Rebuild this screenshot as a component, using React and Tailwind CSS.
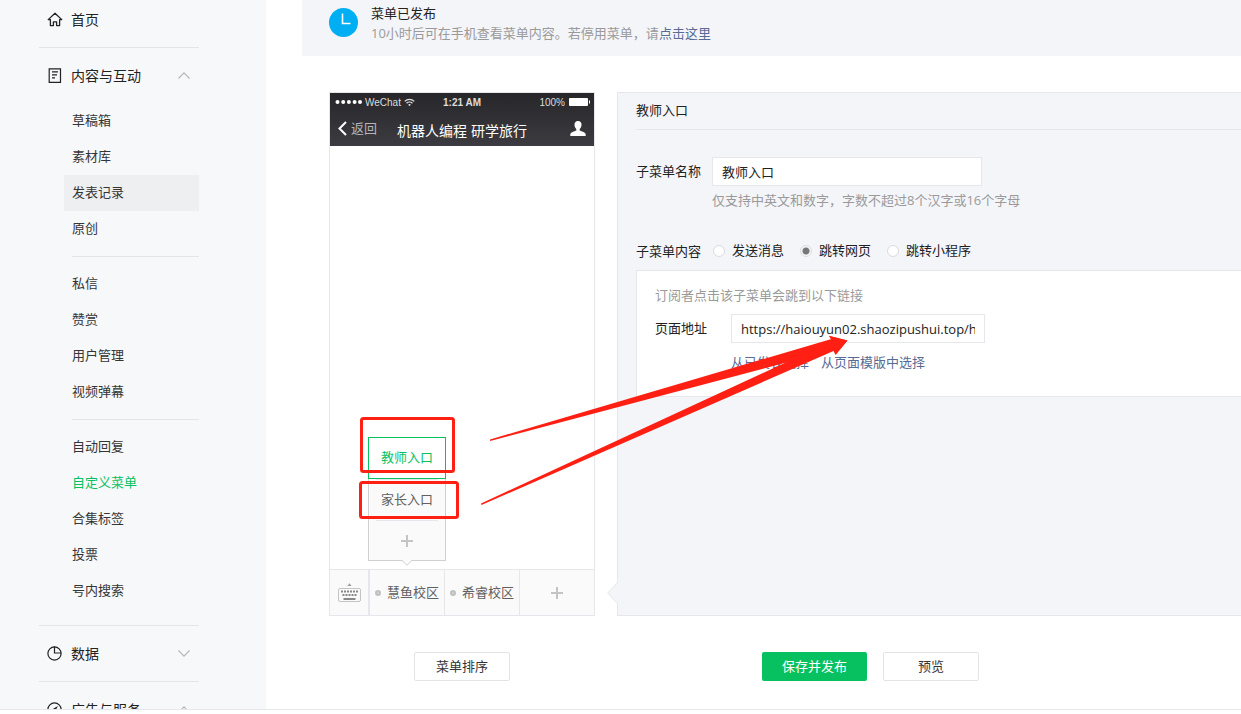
import React from "react";

const contentGroups = [
  ["草稿箱", "素材库", "发表记录", "原创"],
  ["私信", "赞赏", "用户管理", "视频弹幕"],
  ["自动回复", "自定义菜单", "合集标签", "投票", "号内搜索"],
];

const itemStyles = {
  发表记录: "bg-[#eeeff1] text-[#353535]",
  自定义菜单: "text-[#07c160]",
};

function HomeIcon() {
  return (
    <svg className="size-4" viewBox="0 0 16 16" fill="none" stroke="#222" strokeWidth="1.3" strokeLinejoin="round">
      <path d="M8 1.200 1.200 7.600h2.200v6h3V9.800h3.200v3.800h3v-6h2.200z" />
    </svg>
  );
}

function DocIcon() {
  return (
    <svg className="size-4" viewBox="0 0 16 16" fill="none" stroke="#222" strokeWidth="1.2">
      <path d="M2.200.800h11.300v13.600H2.200z" />
      <path d="M5 3.800h6M5 6.800h5M5 9.800h3" />
    </svg>
  );
}

function PieIcon() {
  return (
    <svg className="size-4" viewBox="0 0 16 16" fill="none" stroke="#222" strokeWidth="1.2">
      <circle cx="7.500" cy="7.500" r="6.600" />
      <path d="M7.500.500V7h6.600" />
    </svg>
  );
}

function CompassIcon() {
  return (
    <svg className="size-4" viewBox="0 0 16 16" fill="none" stroke="#222" strokeWidth="1.2">
      <circle cx="7.500" cy="7.500" r="6.600" />
      <path d="M11 4 8.500 8.500 4 11l2.500-4.500z" fill="#222" stroke="none" />
    </svg>
  );
}

function Chevron({ open }) {
  return (
    <svg className="h-2 w-3" viewBox="0 0 12 8" fill="none" stroke="#b4b6b9" strokeWidth="1.1">
      <path d={open ? "M.5 6.500 6 .8 11.500 6.500" : "M.5 .5 6 6.200 11.500 .5"} />
    </svg>
  );
}

function Section({ icon, label, open }) {
  return (
    <button type="button" aria-expanded={open} className="flex h-[55px] w-full shrink-0 items-center pl-2 pr-[9px] text-sm">
      {icon}
      <span className="ml-2 flex-1 text-left">{label}</span>
      <Chevron open={open} />
    </button>
  );
}

function Divider({ className = "" }) {
  return <hr className={`h-px shrink-0 border-0 bg-[#e4e5e8] ${className}`} />;
}

function Sidebar() {
  return (
    <nav className="flex w-[266px] shrink-0 flex-col overflow-hidden bg-[#f7f8fa] pl-[39px] pr-[67px] text-[#222]">
      <a href="#home" className="mb-[7px] flex h-10 shrink-0 items-center pl-2 text-sm">
        <HomeIcon />
        <span className="ml-2">首页</span>
      </a>
      <Divider />
      <Section icon={<DocIcon />} label="内容与互动" open />
      {contentGroups.map((group, i) => (
        <React.Fragment key={group[0]}>
          {i > 0 && <Divider className="my-[9px] ml-[33px]" />}
          <ul className="ml-[25px] shrink-0">
            {group.map((name) => (
              <li key={name}>
                <a href="#menu" className={`flex h-9 items-center pl-2 ${itemStyles[name] || "text-[#353535]"}`}>
                  {name}
                </a>
              </li>
            ))}
          </ul>
        </React.Fragment>
      ))}
      <Divider className="mt-4" />
      <Section icon={<PieIcon />} label="数据" open={false} />
      <Divider />
      <Section icon={<CompassIcon />} label="广告与服务" open />
    </nav>
  );
}

function Notice() {
  return (
    <section className="flex h-14 items-start bg-[#f4f5f9] pl-[27px]">
      <svg className="mt-2 size-[29px]" viewBox="0 0 29 29">
        <circle cx="14.500" cy="14.500" r="14.500" fill="#00aef3" />
        <path d="M13.500 5.500v10h8" fill="none" stroke="#fff" strokeWidth="1.600" />
      </svg>
      <div className="ml-[13px] mt-[3px] leading-5">
        <p className="text-[#222]">菜单已发布</p>
        <p className="text-[#9a9a9a]">
          10小时后可在手机查看菜单内容。若停用菜单，请
          <a href="#disable" className="text-[#576b95]">点击这里</a>
        </p>
      </div>
    </section>
  );
}

function Plus() {
  return (
    <svg className="size-3" viewBox="0 0 12 12" stroke="#c4c4c4" strokeWidth="2">
      <path d="M6 0v12M0 6h12" />
    </svg>
  );
}

function PhoneHeader() {
  return (
    <header className="h-[53px] bg-linear-to-b from-[#27272a] to-[#3c3b41] font-['Liberation_Sans','Noto_Sans_CJK_SC',sans-serif] text-white">
      <div className="flex h-[18px] items-center justify-between px-1 text-[10px] text-[#ddd]">
        <div className="flex flex-1 items-center gap-[3px]">
          <svg className="h-[6px] w-7" viewBox="0 0 28 6" fill="#fff">
            {[3.500, 9.200, 14.900, 20.600, 26].map((x) => (
              <circle key={x} cx={x} cy="3" r="2" />
            ))}
          </svg>
          <span>WeChat</span>
          <svg className="h-[9px] w-[11px]" viewBox="0 0 12 9" fill="none" stroke="#ddd" strokeWidth="1.400">
            <path d="M.8 3.300a7.500 7.500 0 0 1 10.400 0M2.800 5.300a4.600 4.600 0 0 1 6.400 0" />
            <path d="M4.500 6.800 6 8.500l1.500-1.700a2.200 2.200 0 0 0-3 0z" fill="#ddd" stroke="none" />
          </svg>
        </div>
        <span className="font-bold">1:21 AM</span>
        <div className="flex flex-1 items-center justify-end gap-1">
          <span>100%</span>
          <svg className="h-2 w-[21px]" viewBox="0 0 21 8" fill="#fff">
            <rect width="19" height="8" rx="1" />
            <path d="M20 2.500h1v3h-1z" />
          </svg>
        </div>
      </div>
      <div className="grid h-[35px] grid-cols-[1fr_auto_1fr] items-center px-2">
        <button type="button" className="flex items-center gap-1 text-[13px] text-[#b5b5b8]">
          <svg className="h-[15px] w-[9px]" viewBox="0 0 9 15" fill="none" stroke="#fff" strokeWidth="2">
            <path d="M8 1 1.500 7.500 8 14" />
          </svg>
          返回
        </button>
        <h2 className="pt-1 text-sm">机器人编程 研学旅行</h2>
        <svg className="h-[15px] w-4 justify-self-end" viewBox="0 0 16 15" fill="#fff">
          <path d="M8 0C5.500 0 4.300 1.700 4.500 4c.1 1.800.8 3.200 1.800 4v1.600C4.500 10.500.3 11.200.3 13.600V15h15.400v-1.400c0-2.400-4.200-3.100-6-4V8c1-.8 1.700-2.200 1.800-4 .2-2.300-1-4-3.500-4z" />
        </svg>
      </div>
    </header>
  );
}

function KeyboardIcon() {
  return (
    <svg className="h-5 w-[23px]" viewBox="0 0 23 20" fill="none">
      <path d="M9.500 3 11.500 .3 13.500 3z" fill="#999" />
      <rect x=".5" y="5.500" width="22" height="13" rx="1.500" stroke="#c4c4c4" />
      <path d="M3 8.500h17" stroke="#888" strokeWidth="2" strokeDasharray="2 1" />
      <path d="M4.500 12h14" stroke="#888" strokeWidth="2" strokeDasharray="2 1" />
      <path d="M5.500 16h12" stroke="#888" strokeWidth="2" />
    </svg>
  );
}

function SubMenu() {
  return (
    <div className="absolute bottom-[54px] left-[38px] w-[78px] text-[#616161]">
      <div className="border border-[#d0d0d0] bg-[#fafafa]">
        <button type="button" className="-mx-px -mt-px flex h-[42px] w-[78px] items-center justify-center border border-[#07c160] bg-white text-[#07c160]">
          教师入口
        </button>
        <div className="px-[7px]">
          <button type="button" className="flex h-[42px] w-full items-center justify-center border-y border-[#e7e7eb]">
            家长入口
          </button>
        </div>
        <button type="button" aria-label="添加子菜单" className="flex h-[39px] w-full items-center justify-center">
          <Plus />
        </button>
      </div>
      <svg className="absolute left-[34px] top-full -mt-px h-[6px] w-[10px]" viewBox="0 0 10 6">
        <path d="M0 0h10L5 5z" fill="#fafafa" />
        <path d="M0 .5 5 5.200 10 .5" fill="none" stroke="#d0d0d0" />
      </svg>
    </div>
  );
}

function Phone() {
  return (
    <section className="relative flex h-[524px] w-[266px] shrink-0 flex-col border border-[#e7e7eb] bg-white">
      <PhoneHeader />
      <div className="flex-1" />
      <SubMenu />
      <footer className="flex h-[46px] border-t border-[#e7e7eb] bg-[#fafafa] text-[#616161]">
        <div className="flex w-10 items-center justify-center border-r-2 border-[#e7e7eb]">
          <KeyboardIcon />
        </div>
        {["慧鱼校区", "希睿校区"].map((name) => (
          <button key={name} type="button" className="flex w-[75px] items-center justify-center gap-[6px] border-r border-[#e7e7eb]">
            <span className="size-[6px] rounded-full border-2 border-[#c0c0c0] bg-[#d4d4d4]" />
            {name}
          </button>
        ))}
        <button type="button" aria-label="添加菜单" className="flex flex-1 items-center justify-center">
          <Plus />
        </button>
      </footer>
    </section>
  );
}

function Editor() {
  const input = "h-[29px] border border-[#e7e7eb] bg-white px-[9px] text-[#222] outline-none";
  return (
    <section className="relative min-w-0 flex-1 border border-r-0 border-[#e7e7eb] bg-[#f4f5f9] pl-[18px] text-[#222]">
      <h3 className="flex h-[37px] items-center border-b border-[#e7e7eb]">教师入口</h3>
      <div className="mt-[27px] flex">
        <label htmlFor="menu-name" className="w-[76px] leading-[29px]">子菜单名称</label>
        <div>
          <input id="menu-name" defaultValue="教师入口" className={`${input} block w-[270px]`} />
          <p className="mt-1 leading-5 text-[#9a9a9a]">仅支持中英文和数字，字数不超过8个汉字或16个字母</p>
        </div>
      </div>
      <fieldset className="mt-[31px] flex h-5 items-center">
        <legend className="float-left w-[77px] leading-5">子菜单内容</legend>
        <div className="flex items-center gap-4">
          {["发送消息", "跳转网页", "跳转小程序"].map((name) => (
            <label key={name} className="flex items-center gap-[7px]">
              <input
                type="radio"
                name="menu-content"
                defaultChecked={name === "跳转网页"}
                className="size-3 appearance-none rounded-full border border-[#dcdde0] bg-white bg-clip-padding checked:bg-[radial-gradient(circle,#777_0_3px,#f4f5f9_4px)]"
              />
              {name}
            </label>
          ))}
        </div>
      </fieldset>
      <div className="mt-[9px] h-[127px] border border-r-0 border-[#e7e7eb] bg-white pl-[18px] pt-[14px]">
        <p className="leading-5 text-[#9a9a9a]">订阅者点击该子菜单会跳到以下链接</p>
        <div className="mt-[9px] flex">
          <label htmlFor="page-url" className="w-[76px] leading-[29px]">页面地址</label>
          <div>
            <input id="page-url" defaultValue="https://haiouyun02.shaozipushui.top/h" className={`${input} block w-[254px]`} />
            <div className="mt-[9px] flex gap-3 leading-5 text-[#576b95]">
              <a href="#published">从已发表选择</a>
              <a href="#templates">从页面模版中选择</a>
            </div>
          </div>
        </div>
      </div>
      <svg className="absolute -left-[11px] bottom-[11px] h-[22px] w-[11px]" viewBox="0 0 11 22">
        <path d="M11 0 .7 11 11 22" fill="#f4f5f9" stroke="#e7e7eb" />
      </svg>
    </section>
  );
}

function Annotations() {
  return (
    <svg className="pointer-events-none absolute left-0 top-0 h-[714px] w-[1241px]" viewBox="0 0 1241 714" fill="#ff2013">
      <g fill="none" stroke="#ff2013" strokeWidth="3">
        <rect x="361.500" y="418.500" width="92" height="53" rx="2" />
        <rect x="360.500" y="482.500" width="97" height="35" rx="2" />
      </g>
      <path d="M490 439.500 831.500 339 829 335.700 847.500 340.500 835.500 354 833.500 350 490 441z" />
      <path d="M481 503.500 832 341 829 336 847.500 340.500 835.700 355 833.500 351 481.500 505z" />
    </svg>
  );
}

export default function App() {
  const outline = "h-[29px] w-24 rounded-[2px] border border-[#e4e4e4] bg-white text-[#353535]";
  return (
    <div className="relative flex h-screen flex-col overflow-hidden bg-white pb-1 font-['Open_Sans','Noto_Sans_CJK_SC',sans-serif] text-[13px]">
      <div className="flex min-h-0 flex-1 border-b border-[#e7e7eb]">
        <Sidebar />
        <main className="min-w-0 flex-1 overflow-hidden pl-9">
          <Notice />
          <div className="mt-9 flex gap-[22px] pl-[27px]">
            <Phone />
            <Editor />
          </div>
          <div className="mt-9 flex gap-[22px] pl-[27px]">
            <div className="flex w-[266px] justify-center">
              <button type="button" className={outline}>菜单排序</button>
            </div>
            <div className="flex flex-1 gap-4 pl-[145px]">
              <button type="button" className="h-[29px] w-[105px] rounded-[2px] bg-[#07c160] text-white">保存并发布</button>
              <button type="button" className={outline}>预览</button>
            </div>
          </div>
        </main>
      </div>
      <Annotations />
    </div>
  );
}
